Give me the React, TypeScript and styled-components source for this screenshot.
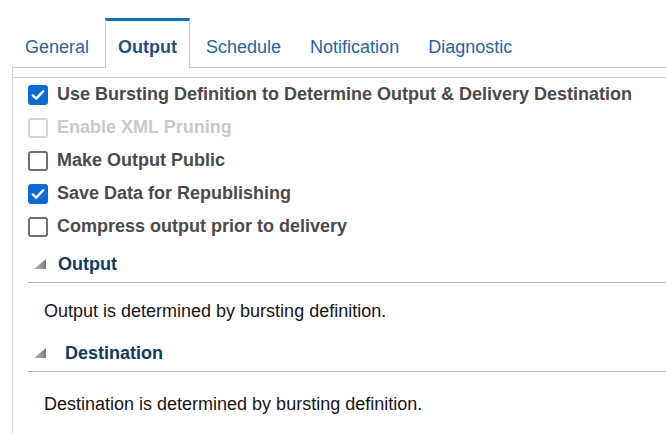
import React from "react";
import styled, { createGlobalStyle } from "styled-components";

const Global = createGlobalStyle`
  html, body { margin: 0; padding: 0; height: 100%; background: #fff; }
  body { font-family: "Liberation Sans", Arial, sans-serif; }
  #root { height: 100%; }
`;

const Page = styled.div`
  display: flex;
  flex-direction: column;
  height: 100%;
  padding-top: 18px;
  box-sizing: border-box;
`;

const TabBar = styled.div`
  display: flex;
  gap: 3px;
  margin-left: 12px;
  border-bottom: 1px solid #c5ced8;
  height: 49px;
`;

const Tab = styled.div<{ $active?: boolean }>`
  box-sizing: border-box;
  height: ${(p) => (p.$active ? "50px" : "49px")};
  padding: 15px 12px 0;
  border-top: 3px solid ${(p) => (p.$active ? "#0572ce" : "transparent")};
  border-left: 1px solid ${(p) => (p.$active ? "#c5ced8" : "transparent")};
  border-right: 1px solid ${(p) => (p.$active ? "#c5ced8" : "transparent")};
  background: #fff;
  font-size: 18px;
  line-height: 22px;
  font-weight: ${(p) => (p.$active ? 700 : 400)};
  color: ${(p) => (p.$active ? "#1f4f82" : "#1f65ad")};
  white-space: nowrap;
`;

const Panel = styled.div`
  flex: 1;
  margin-left: 12px;
  padding-top: 9px;
  border-left: 1px solid #cdd5df;
`;

const Content = styled.div`
  border-top: 1px solid #c5ced8;
  padding-left: 15px;
`;

const Row = styled.label`
  display: flex;
  align-items: center;
  gap: 9px;
  height: 33px;
`;

const Box = styled.span<{ $checked?: boolean; $disabled?: boolean }>`
  box-sizing: border-box;
  width: 20px;
  height: 20px;
  border-radius: 3px;
  display: flex;
  align-items: center;
  justify-content: center;
  background: ${(p) => (p.$checked ? "#0a6bd6" : "#fff")};
  border: 2px solid
    ${(p) => (p.$checked ? "#0a6bd6" : p.$disabled ? "#d3d3d3" : "#6e6e74")};
`;

const Label = styled.span<{ $disabled?: boolean }>`
  font-size: 18px;
  font-weight: 700;
  color: ${(p) => (p.$disabled ? "#c9c9c9" : "#4a4a4a")};
  white-space: nowrap;
`;

const SectionHeader = styled.div`
  display: flex;
  align-items: center;
  padding: 10px 0 7px 6px;
  border-bottom: 1px solid #b4b4b4;
  height: 22px;
`;

const HeaderText = styled.span<{ $indent: number }>`
  margin-left: ${(p) => p.$indent}px;
  font-size: 18px;
  font-weight: 700;
  color: #0c3c61;
`;

const Body = styled.div<{ $top: number }>`
  padding: ${(p) => p.$top}px 0 10px 16px;
  font-size: 18px;
  line-height: 22px;
  color: #161513;
`;

const Check = () => (
  <svg width="14" height="12" viewBox="0 0 14 12">
    <path d="M1.8 6.4 L5.2 9.6 L12.2 2.2" fill="none" stroke="#fff" strokeWidth="2.4" strokeLinecap="round" strokeLinejoin="round" />
  </svg>
);

const Triangle = () => (
  <svg width="12" height="10" viewBox="0 0 12 10">
    <defs>
      <linearGradient id="tg" x1="0" y1="0" x2="1" y2="0">
        <stop offset="0" stopColor="#b8b8b8" />
        <stop offset="1" stopColor="#7d7d7d" />
      </linearGradient>
    </defs>
    <polygon points="12,0 12,10 0,10" fill="url(#tg)" />
  </svg>
);

const options = [
  { text: "Use Bursting Definition to Determine Output & Delivery Destination", checked: true },
  { text: "Enable XML Pruning", disabled: true },
  { text: "Make Output Public" },
  { text: "Save Data for Republishing", checked: true },
  { text: "Compress output prior to delivery" },
];

const tabs = ["General", "Output", "Schedule", "Notification", "Diagnostic"];

export default function App() {
  return (
    <>
      <Global />
      <Page>
        <TabBar>
          {tabs.map((t) => (
            <Tab key={t} $active={t === "Output"}>
              {t}
            </Tab>
          ))}
        </TabBar>
        <Panel>
          <Content>
            {options.map((o) => (
              <Row key={o.text}>
                <Box $checked={o.checked} $disabled={o.disabled}>
                  {o.checked && <Check />}
                </Box>
                <Label $disabled={o.disabled}>{o.text}</Label>
              </Row>
            ))}
            <SectionHeader>
              <Triangle />
              <HeaderText $indent={12}>Output</HeaderText>
            </SectionHeader>
            <Body $top={17}>Output is determined by bursting definition.</Body>
            <SectionHeader>
              <Triangle />
              <HeaderText $indent={19}>Destination</HeaderText>
            </SectionHeader>
            <Body $top={21}>Destination is determined by bursting definition.</Body>
          </Content>
        </Panel>
      </Page>
    </>
  );
}
